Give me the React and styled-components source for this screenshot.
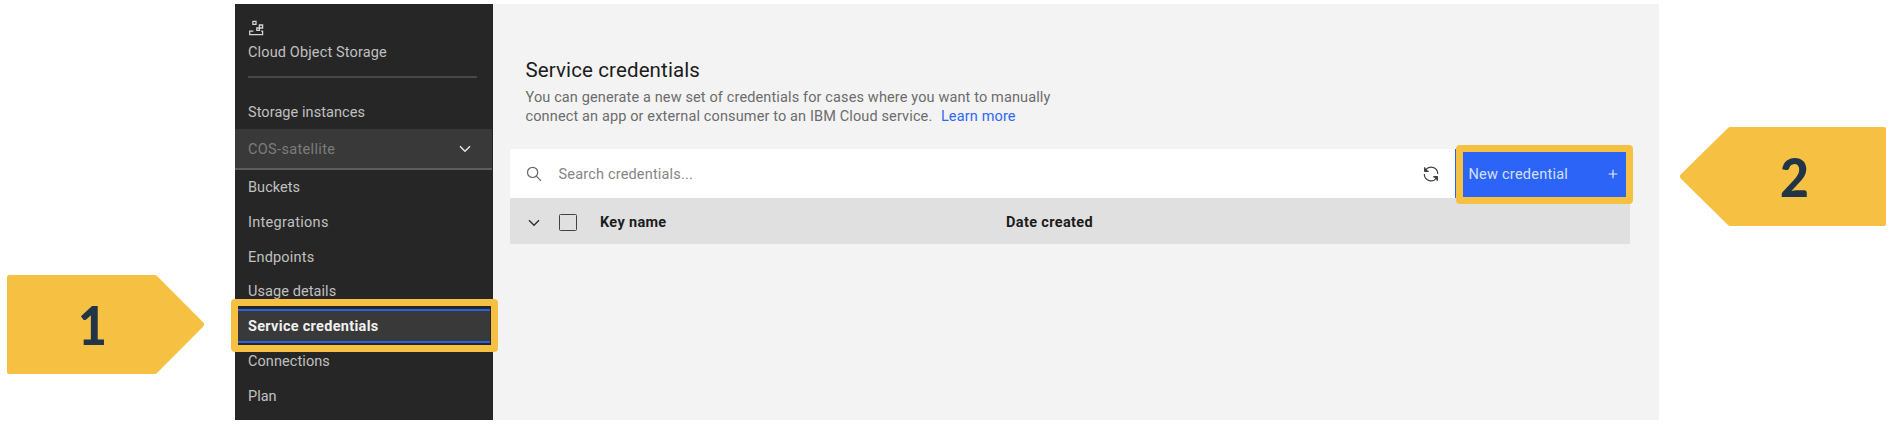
import React from 'react';
import styled, { createGlobalStyle } from 'styled-components';

const GlobalStyle = createGlobalStyle`
  * { box-sizing: border-box; }
  body { margin: 0; background: #fff; overflow: hidden; }
`;

const Stage = styled.div`
  display: flex;
  align-items: flex-start;
  width: 1892px;
  height: 428px;
  padding: 4px 6px 8px 7px;
  font-family: Roboto, 'Liberation Sans', sans-serif;
  font-size: 14.5px;
  color: #161616;
`;

const Marker = styled.div`
  position: relative;
  flex: none;
  display: flex;
  align-items: center;
  width: ${p => p.$width}px;
  height: 99px;
  margin-top: ${p => p.$top}px;
  padding-left: ${p => p.$indent}px;
`;

const MarkerShape = styled.svg`
  position: absolute;
  inset: 0;
`;

const MarkerDigit = styled.span`
  position: relative;
  font: 900 53px/60px Lato, sans-serif;
  color: #213547;
  transform: scaleX(0.94);
`;

const Panel = styled.div`
  flex: none;
  display: flex;
  width: 1424px;
  height: 416px;
  margin: 0 21px 0 31px;
  background: #f3f3f3;
`;

const Sidebar = styled.nav`
  flex: none;
  width: 258px;
  background: #262626;
  color: #c0c0c0;
`;

const SidebarHeader = styled.div`
  height: 74px;
  margin: 0 16px 0 13px;
  padding-top: 16px;
  border-bottom: 2px solid #484848;
`;

const Label = styled.span`
  white-space: nowrap;
  letter-spacing: ${p => p.$ls || 0}px;
`;

const ServiceName = styled.div`
  margin-top: 2px;
  line-height: 30px;
`;

const ServiceIcon = styled.svg`
  display: block;
`;

const InstancesLink = styled.div`
  height: 51px;
  padding: 22px 0 0 13px;
  line-height: 26px;
`;

const InstanceSelect = styled.div`
  display: flex;
  align-items: center;
  justify-content: space-between;
  width: 257px;
  height: 41px;
  padding: 1px 21px 0 13px;
  background: #393939;
  border-bottom: 2px solid #5c5c5c;
  color: #7c7c7c;
`;

const NavList = styled.div`
  display: flex;
  flex-direction: column;
`;

const NavItem = styled.div`
  position: relative;
  height: 34.75px;
  padding-left: 13px;
  line-height: 36px;
`;

const ActiveItem = styled(NavItem)`
  margin-right: 3px;
  background: linear-gradient(#2b62e0 0 2px, #393939 2px 32px, #2b62e0 32px 34px, #262626 34px);
  font-weight: 700;
  color: #f0f0f0;
`;

const Highlight = styled.div`
  position: absolute;
  z-index: 2;
  left: ${p => p.$left}px;
  top: ${p => p.$top}px;
  width: ${p => p.$width}px;
  height: ${p => p.$height}px;
  border: 7px solid #f6c042;
  border-radius: 4px;
  pointer-events: none;
`;

const Main = styled.main`
  flex: 1;
  padding: 54px 29px 0 17px;
`;

const Title = styled.h1`
  margin: 0 0 0 15.5px;
  font-weight: 400;
  font-size: 20.5px;
  line-height: 25px;
  color: #1c1c1c;
`;

const Description = styled.div`
  margin: 6px 0 0 15.5px;
  line-height: 18.5px;
  color: #6c6c6c;
`;

const DescriptionLine = styled.div`
  white-space: nowrap;
`;

const LearnMore = styled.a`
  margin-left: 8.5px;
  color: #2f68f5;
  letter-spacing: 0.14px;
`;

const Toolbar = styled.div`
  display: flex;
  align-items: center;
  height: 49px;
  margin-top: 23px;
  background: #fff;
`;

const SearchField = styled.div`
  flex: 1;
  display: flex;
  align-items: center;
  gap: 16.5px;
  padding: 1px 0 0 16px;
  color: #858585;
`;

const Refresh = styled.div`
  display: flex;
  margin-right: 15px;
`;

const NewButton = styled.div`
  position: relative;
  display: flex;
  align-items: center;
  justify-content: space-between;
  width: 175px;
  height: 49px;
  padding: 1px 12px 0 13.5px;
  background: #2b64f6;
  color: #d5e0ff;
`;

const TableHead = styled.div`
  display: flex;
  align-items: center;
  height: 46px;
  padding: 3px 0 0 18px;
  background: #e0e0e0;
  font-weight: 700;
  color: #1c1c1c;
`;

const Checkbox = styled.div`
  width: 18px;
  height: 17px;
  margin: 0 23px 1px 19px;
  border: 1px solid #424242;
  border-radius: 1.5px;
`;

const KeyColumn = styled.div`
  width: 406px;
`;

const Chevron = ({ color }) => (
  <svg width="12" height="8" viewBox="0 0 12 8" fill="none" stroke={color} strokeWidth="1.5">
    <path d="M1 1.3 6 6.3 11 1.3" />
  </svg>
);

const leading = [['Buckets', 0.05], ['Integrations', 0.3], ['Endpoints', 0.19], ['Usage details', 0.08]];
const trailing = [['Connections', 0.08], ['Plan', 0]];

export default function App() {
  return (
    <Stage>
      <GlobalStyle />
      <Marker $width={197} $top={271} $indent={70}>
        <MarkerShape width="197" height="99">
          <path d="M2 0H148Q149 0 150 1L196.3 47.5Q198 49.5 196.3 51.5L150 98Q149 99 148 99H2Q0 99 0 97V2Q0 0 2 0Z" fill="#f6c042" />
        </MarkerShape>
        <MarkerDigit>1</MarkerDigit>
      </Marker>

      <Panel>
        <Sidebar>
          <SidebarHeader>
            <ServiceIcon width="17" height="16" viewBox="0 0 17 16" fill="none" stroke="#d4d4d4" strokeWidth="1.3">
              <path d="M4.9 1.3h3.1v3H4.9zM11.4 5h3.2v3h-3.2zM8.8 8h2.6v2.4H8.8zM5.4 11.2H1.7v3.4h12.9v-3.4h-1.5" />
            </ServiceIcon>
            <ServiceName><Label $ls={0.14}>Cloud Object Storage</Label></ServiceName>
          </SidebarHeader>
          <InstancesLink><Label $ls={0.07}>Storage instances</Label></InstancesLink>
          <InstanceSelect>
            <Label $ls={0.34}>COS-satellite</Label>
            <Chevron color="#e4e4e4" />
          </InstanceSelect>
          <NavList>
            {leading.map(([name, ls]) => <NavItem key={name}><Label $ls={ls}>{name}</Label></NavItem>)}
            <ActiveItem>
              <Label $ls={0.3}>Service credentials</Label>
              <Highlight $left={-4} $top={-10} $width={267} $height={53} />
            </ActiveItem>
            {trailing.map(([name, ls]) => <NavItem key={name}><Label $ls={ls}>{name}</Label></NavItem>)}
          </NavList>
        </Sidebar>

        <Main>
          <Title><Label $ls={0.12}>Service credentials</Label></Title>
          <Description>
            <DescriptionLine><Label $ls={0.13}>You can generate a new set of credentials for cases where you want to manually</Label></DescriptionLine>
            <DescriptionLine>
              <Label $ls={0.13}>connect an app or external consumer to an IBM Cloud service.</Label>
              <LearnMore>Learn more</LearnMore>
            </DescriptionLine>
          </Description>
          <Toolbar>
            <SearchField>
              <svg width="16" height="16" viewBox="0 0 16 16" fill="none" stroke="#686868" strokeWidth="1.2">
                <circle cx="6.6" cy="6.4" r="5.1" />
                <path d="M10.3 10.1 15 14.8" />
              </svg>
              <Label $ls={0.18}>Search credentials...</Label>
            </SearchField>
            <Refresh>
              <svg width="18" height="18" viewBox="0 0 32 32" fill="#3a3a3a">
                <path d="M12 10H6.78A11 11 0 0 1 27 16h2A13 13 0 0 0 6 7.68V4H4v8h8zM20 22h5.22A11 11 0 0 1 5 16H3a13 13 0 0 0 23 8.32V28h2V20H20z" />
                <path d="M4 4V12H12zM28 28V20H20z" />
              </svg>
            </Refresh>
            <NewButton>
              <Label $ls={0.25}>New credential</Label>
              <svg width="10" height="10" viewBox="0 0 10 10" stroke="#e6edff" strokeWidth="1.2">
                <path d="M5 .7v8.6M.7 5h8.6" />
              </svg>
              <Highlight $left={1} $top={-4} $width={177} $height={59} />
            </NewButton>
          </Toolbar>
          <TableHead>
            <Chevron color="#333" />
            <Checkbox />
            <KeyColumn><Label $ls={0.32}>Key name</Label></KeyColumn>
            <Label $ls={0.36}>Date created</Label>
          </TableHead>
        </Main>
      </Panel>

      <Marker $width={206} $top={123} $indent={99}>
        <MarkerShape width="206" height="99">
          <path d="M204 0H50Q49 0 48 1L.7 47.5Q-.8 49.5.7 51.5L48 98Q49 99 50 99H204Q206 99 206 97V2Q206 0 204 0Z" fill="#f6c042" />
        </MarkerShape>
        <MarkerDigit>2</MarkerDigit>
      </Marker>
    </Stage>
  );
}
